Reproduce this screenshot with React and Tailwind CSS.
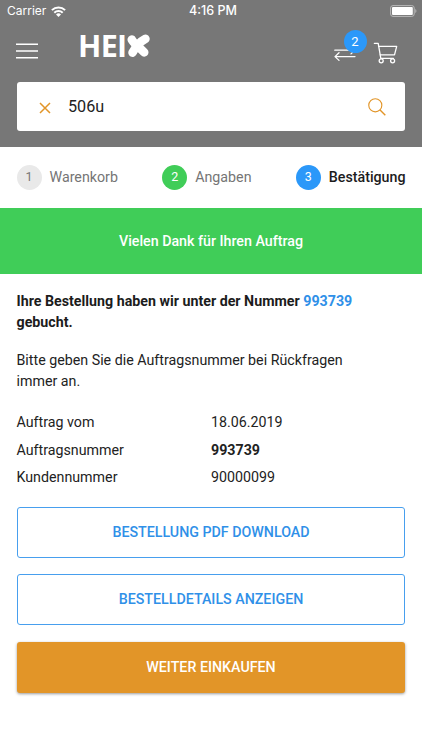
const steps = [
  { nr: 1, label: 'Warenkorb', dot: 'bg-[#e9e9e9] text-[#777777]', text: 'text-[#757575]' },
  { nr: 2, label: 'Angaben', dot: 'bg-[#40cd58] text-white', text: 'text-[#757575]' },
  { nr: 3, label: 'Bestätigung', dot: 'bg-[#2b98f9] text-white', text: 'text-[#1c1c1c] font-medium' },
];

const details = [
  { label: 'Auftrag vom', value: '18.06.2019' },
  { label: 'Auftragsnummer', value: '993739', bold: true },
  { label: 'Kundennummer', value: '90000099' },
];

function StatusBar() {
  return (
    <div className="grid h-[22px] grid-cols-3 items-center px-[7px] font-[Inter,sans-serif] text-[12px] leading-none text-white">
      <div className="flex items-center gap-[5px]">
        <span>Carrier</span>
        <svg width="15" height="11" viewBox="0 0 15 11" fill="none" stroke="white" strokeWidth="2">
          <path d="M.9 4.1a9.4 9.4 0 0 1 13.2 0" />
          <path d="M3.3 6.7a6 6 0 0 1 8.4 0" />
          <path d="M7.5 11 5 8.5a3.6 3.6 0 0 1 5 0z" fill="white" stroke="none" />
        </svg>
      </div>
      <span className="pl-[4px] text-center text-[12.5px] font-medium">4:16 PM</span>
      <svg className="-mr-[3px] justify-self-end" width="28" height="12" viewBox="0 0 28 12" fill="none">
        <rect x=".6" y=".6" width="23.6" height="10.8" rx="2.4" stroke="#b9b9b9" strokeWidth="1" />
        <rect x="2" y="2" width="20.8" height="8" rx="1" fill="white" />
        <path d="M25.3 4c1.5.5 1.5 3.5 0 4z" fill="#b9b9b9" />
      </svg>
    </div>
  );
}

function Logo() {
  return (
    <div className="flex h-[24px] items-center text-white">
      <span className="w-[48.5px] font-['Open_Sans',sans-serif] text-[30.5px] leading-none font-bold tracking-[-0.7px]">HEI</span>
      <svg width="24" height="24" viewBox="0 0 24 24" fill="none" stroke="white" strokeWidth="8.6" strokeLinecap="round">
        <path d="M4.8 5.6c2 4.2 8 8 12.4 12.8" />
        <path d="M18.4 4.8C14 7 8.6 12.8 5.6 18.6" />
      </svg>
    </div>
  );
}

function Header() {
  return (
    <header className="h-[147px] bg-[#777777]">
      <StatusBar />
      <div className="flex h-[60px] items-start pl-[16px] pr-[24px]">
        <svg className="mt-[21px]" width="22" height="16" viewBox="0 0 22 16" stroke="white" strokeWidth="1.6">
          <path d="M0 1.3h22M0 8h22M0 14.7h22" />
        </svg>
        <div className="mt-[11.5px] ml-[40px]">
          <Logo />
        </div>
        <div className="relative mt-[24px] ml-auto">
          <svg width="22" height="16" viewBox="0 0 22 16" fill="none" stroke="white" strokeWidth="1.3" strokeLinecap="round" strokeLinejoin="round">
            <path d="M.8 4.2h19.8M17 .5l3.8 3.7L17 7.9" />
            <path d="M21 10.6H1.2M5 6.8l-4 3.8 4 3.8" />
          </svg>
          <span className="absolute -top-[16px] left-[9.5px] flex h-[23px] w-[23px] items-center justify-center rounded-full bg-[#2b98f9] text-[13px] text-white">2</span>
        </div>
        <svg className="mt-[20px] ml-[17px]" width="25" height="23" viewBox="0 0 25 23" fill="none" stroke="white" strokeWidth="1.3" strokeLinejoin="round" strokeLinecap="round">
          <path d="M1.4 1.4h3.8l2.6 15h12.6" />
          <path d="M5.7 4.4h18l-2.2 8.4H7.2" />
          <circle cx="8.2" cy="18.8" r="2" />
          <circle cx="19.6" cy="18.8" r="2" />
        </svg>
      </div>
      <div className="mx-[17px] flex h-[49px] items-center rounded-[3px] bg-white pr-[19px] pl-[22px]">
        <svg className="mt-[2px]" width="12" height="12" viewBox="0 0 12 12" stroke="#e29528" strokeWidth="1.5">
          <path d="m1 1 10 10M11 1 1 11" />
        </svg>
        <span className="ml-[17px] pt-[2px] text-[16.2px] text-[#222222]">506u</span>
        <svg className="mt-px ml-auto" width="18" height="18" viewBox="0 0 19 19" fill="none" stroke="#e29528" strokeWidth="1.2">
          <circle cx="7.7" cy="7.7" r="6.9" />
          <path d="m12.5 12.5 5.8 5.8" strokeWidth="1.5" />
        </svg>
      </div>
    </header>
  );
}

function Steps() {
  return (
    <div className="flex h-[61px] items-center justify-between px-[16.5px]">
      {steps.map((step) => (
        <div key={step.nr} className="flex items-center gap-[8px]">
          <span className={`flex h-[25px] w-[25px] items-center justify-center rounded-full text-[12.5px] ${step.dot}`}>{step.nr}</span>
          <span className={step.text}>{step.label}</span>
        </div>
      ))}
    </div>
  );
}

export default function App() {
  return (
    <div className="flex h-[750px] w-[422px] flex-col overflow-hidden bg-white font-[Roboto,sans-serif] text-[14.24px] text-[#222222]">
      <Header />
      <Steps />
      <div className="flex h-[66px] items-center justify-center bg-[#40cd58] pt-[2px] font-medium text-white">
        Vielen Dank für Ihren Auftrag
      </div>

      <main className="px-[16.5px] pt-[16.5px] leading-[21.5px]">
        <p className="font-bold text-[#1c1c1c]">
          Ihre Bestellung haben wir unter der Nummer <span className="text-[#2f90e8]">993739</span>
          <br />
          gebucht.
        </p>
        <p className="mt-[16px]">
          Bitte geben Sie die Auftragsnummer bei Rückfragen
          <br />
          immer an.
        </p>

        <dl className="mt-[16.5px]">
          {details.map((row) => (
            <div key={row.label} className="grid h-[27.5px] grid-cols-2 items-center">
              <dt>{row.label}</dt>
              <dd className={row.bold ? 'font-bold' : ''}>{row.value}</dd>
            </div>
          ))}
        </dl>

        <div className="mx-[0.5px] mt-[15px] flex flex-col gap-[16.5px]">
          <button className="h-[51px] rounded-[3px] border border-[#479fee] pt-px font-medium text-[#2f90e8]">BESTELLUNG PDF DOWNLOAD</button>
          <button className="h-[51px] rounded-[3px] border border-[#479fee] pt-px font-medium text-[#2f90e8]">BESTELLDETAILS ANZEIGEN</button>
          <button className="h-[51px] rounded-[3px] bg-[#e29528] pt-[2px] font-medium text-white shadow-[0_1px_3px_rgba(0,0,0,0.4)]">WEITER EINKAUFEN</button>
        </div>
      </main>
    </div>
  );
}
